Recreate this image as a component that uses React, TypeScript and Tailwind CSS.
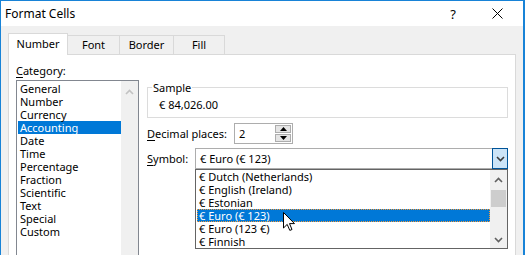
const categories = [
  "General",
  "Number",
  "Currency",
  "Accounting",
  "Date",
  "Time",
  "Percentage",
  "Fraction",
  "Scientific",
  "Text",
  "Special",
  "Custom",
];

const symbols = [
  "€ Dutch (Netherlands)",
  "€ English (Ireland)",
  "€ Estonian",
  "€ Euro (€ 123)",
  "€ Euro (123 €)",
  "€ Finnish",
];

function Chevron({ dir, color }: { dir: "up" | "down"; color: string }) {
  return (
    <svg width="9" height="6" viewBox="0 0 9 6">
      <path
        d={dir === "up" ? "M1 5 L4.5 1.5 L8 5" : "M1 1 L4.5 4.5 L8 1"}
        fill="none"
        stroke={color}
        strokeWidth="1.6"
      />
    </svg>
  );
}

function Cursor() {
  return (
    <svg width="13" height="20" viewBox="0 0 13 20" className="absolute left-[87px] top-[42px]">
      <path
        d="M0.5 0.5 L0.5 16 L4.2 12.4 L6.8 18.4 L9 17.5 L6.5 11.6 L11.5 11.6 Z"
        fill="#fff"
        stroke="#000"
        strokeWidth="1"
      />
    </svg>
  );
}

export default function App() {
  return (
    <div className="w-[525px] h-[255px] overflow-hidden bg-[#f0f0f0] border-l border-t border-r-2 border-[#1883d7] flex flex-col font-['Noto_Sans',sans-serif] text-[11px] text-black whitespace-nowrap">
      {/* Title bar */}
      <div className="h-[25px] bg-white flex items-center shrink-0">
        <span className="ml-[4px] text-[12px] leading-[16px]">Format Cells</span>
        <span className="ml-auto text-[13px] leading-[16px] w-[10px] text-center">?</span>
        <svg width="11" height="11" viewBox="0 0 11 11" className="ml-[34px] mr-[20px]">
          <path d="M0.5 0.5 L10.5 10.5 M10.5 0.5 L0.5 10.5" stroke="#000" strokeWidth="1" />
        </svg>
      </div>

      {/* Body */}
      <div className="flex-1 px-[7px] pt-[7px] flex flex-col">
        {/* Tabs */}
        <div className="flex items-end h-[21px] leading-[14px]">
          <div className="relative z-10 w-[60px] h-[22px] -mb-px bg-white border border-b-0 border-[#d9d9d9] flex items-center justify-center pb-[2px]">
            Number
          </div>
          <div className="w-[52px] h-[19px] border-t border-r border-[#d9d9d9] flex items-center justify-center">Font</div>
          <div className="w-[54px] h-[19px] border-t border-r border-[#d9d9d9] flex items-center justify-center">Border</div>
          <div className="w-[51px] h-[19px] border-t border-r border-[#d9d9d9] flex items-center justify-center">Fill</div>
        </div>

        {/* Panel */}
        <div className="w-[508px] flex-1 bg-white border border-[#d9d9d9] flex pl-[7px] pt-[9px]">
          {/* Category column */}
          <div className="flex flex-col w-[123px]">
            <div className="leading-[14px] mb-[2px]">
              <span className="underline underline-offset-[2px]">C</span>ategory:
            </div>
            <div className="flex h-[200px] border border-[#828790]">
              <div className="flex-1 pt-[1px] pl-px">
                {categories.map((c) => (
                  <div
                    key={c}
                    className={`h-[13px] leading-[13px] pl-[2px] ${c === "Accounting" ? "bg-[#0078d7] text-white" : ""}`}
                  >
                    {c}
                  </div>
                ))}
              </div>
              <div className="w-[17px] bg-[#f0f0f0] flex justify-center pt-[8px]">
                <Chevron dir="up" color="#c2c2c2" />
              </div>
            </div>
          </div>

          {/* Right column */}
          <div className="ml-[8px] w-[361px] flex flex-col">
            <fieldset className="mt-[16px] h-[38px] border border-[#dcdcdc] pl-[4px]">
              <legend className="px-[1px] leading-[15px]">Sample</legend>
              <div className="pl-[7px] pt-[3px] leading-[14px]">€ 84,026.00</div>
            </fieldset>

            <div className="mt-[5px] flex items-center h-[21px]">
              <div className="w-[87px] leading-[14px]">
                <span className="underline underline-offset-[2px]">D</span>ecimal places:
              </div>
              <div className="w-[59px] h-[21px] border border-[#adadad] flex items-center">
                <span className="pl-[4px] flex-1 leading-[14px]">2</span>
                <div className="flex flex-col gap-px w-[16px] mr-px">
                  <div className="h-[8px] bg-[#e5e5e5] border border-[#adadad] flex items-center justify-center">
                    <svg width="7" height="4" viewBox="0 0 7 4"><path d="M0 4 L3.5 0 L7 4 Z" fill="#000" /></svg>
                  </div>
                  <div className="h-[8px] bg-[#e5e5e5] border border-[#adadad] flex items-center justify-center">
                    <svg width="7" height="4" viewBox="0 0 7 4"><path d="M0 0 L3.5 4 L7 0 Z" fill="#000" /></svg>
                  </div>
                </div>
              </div>
            </div>

            <div className="mt-[4px] flex items-center h-[21px]">
              <div className="w-[48px] leading-[14px]">
                <span className="underline underline-offset-[2px]">S</span>ymbol:
              </div>
              <div className="relative w-[313px] h-[21px] border border-[#adadad] flex items-center">
                <span className="pl-[4px] flex-1 leading-[14px]">€ Euro (€ 123)</span>
                <div className="w-[16px] h-[21px] -mr-px bg-[#cce4f7] border border-[#005499] flex items-center justify-center">
                  <Chevron dir="down" color="#3c3c3c" />
                </div>

                {/* Dropdown list */}
                <div className="absolute left-[-1px] top-[20px] w-[313px] h-[80px] bg-white border border-[#646464] flex z-20">
                  <div className="relative flex-1 pl-px">
                    {symbols.map((s) => (
                      <div
                        key={s}
                        className={`h-[13px] leading-[13px] pl-[2px] ${
                          s === "€ Euro (€ 123)" ? "bg-[#0078d7] text-white outline-1 outline-dotted outline-[#f49a3a] -outline-offset-1" : ""
                        }`}
                      >
                        {s}
                      </div>
                    ))}
                    <Cursor />
                  </div>
                  <div className="w-[17px] bg-[#f0f0f0] flex flex-col items-center">
                    <div className="h-[20px] flex items-center">
                      <Chevron dir="up" color="#606060" />
                    </div>
                    <div className="w-[15px] h-[17px] bg-[#cdcdcd]" />
                    <div className="mt-auto h-[17px] flex items-center">
                      <Chevron dir="down" color="#606060" />
                    </div>
                  </div>
                </div>
              </div>
            </div>
          </div>
        </div>
      </div>
    </div>
  );
}
